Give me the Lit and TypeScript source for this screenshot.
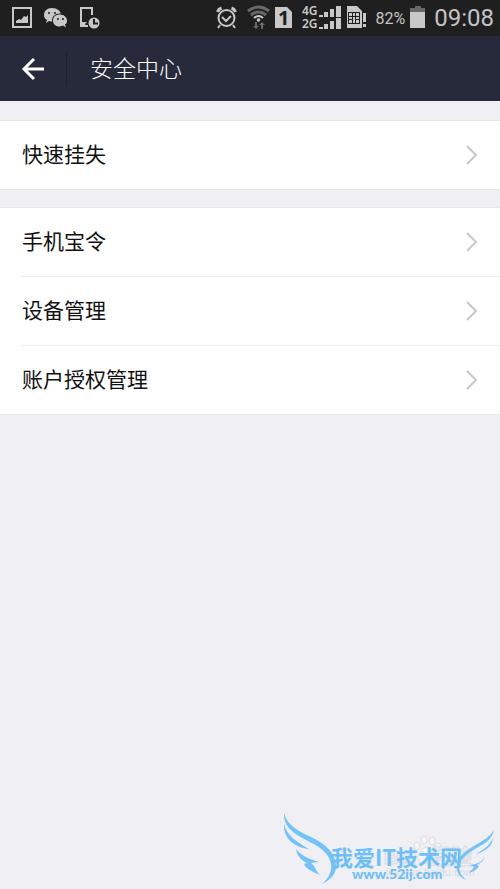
import { LitElement, html, css, svg } from "lit";
import { customElement, property } from "lit/decorators.js";

@customElement("status-bar")
class StatusBar extends LitElement {
  static styles = css`
    :host {
      display: flex;
      align-items: center;
      height: 36px;
      padding: 0 6px 0 8px;
      background: #1f1f1f;
      color: #c4c4c4;
      font-family: Roboto, "Liberation Sans", sans-serif;
    }
    svg {
      display: block;
      flex: none;
      height: 36px;
      fill: #c8c8c8;
    }
    .w32 { width: 32px; }
    .w30 { width: 30px; }
    .w24 { width: 24px; }
    .w48 { width: 48px; }
    .push { margin-left: auto; }
    .line {
      fill: none;
      stroke: #c8c8c8;
      stroke-width: 2;
    }
    .thick { stroke-width: 3; }
    .dark { fill: #1f1f1f; }
    .darkline {
      fill: none;
      stroke: #1f1f1f;
      stroke-width: 2;
    }
    .dim { fill: none; stroke: #686868; stroke-width: 3; }
    .dimfill { fill: #686868; }
    .net { font: 600 12px "Noto Sans", sans-serif; }
    .one { font: bold 20px "Noto Sans", sans-serif; fill: #1f1f1f; }
    .percent { font-size: 16px; padding: 0 1px 0 8px; }
    .time { font-size: 24px; padding-left: 4px; }
  `;
  render() {
    return html`
      <svg class="w32" viewBox="8 0 32 36" aria-hidden="true">
        <rect class="line" x="13" y="8" width="18" height="19" />
        <path d="M16 23v-2l3-2 2 1 3-4 2 1 2-2v8z" />
      </svg>
      <svg class="w32" viewBox="40 0 32 36" aria-hidden="true">
        <path d="M52 8c-5 0-8 3-8 7 0 2 1 4 3 5l-1 3 3-2 4 1c5 0 8-3 8-7s-4-7-9-7z" />
        <path class="dark" d="M60 13.500c-5 0-8 3-8 7s3 7.500 8 7.500 8-3 8-7-3-7.500-8-7.500z" />
        <path d="M60 14.500c-4 0-7 2-7 6s3 6 7 6l3-1 3 2-1-3c2-1 2-3 2-4 0-3-3-6-7-6z" />
        <g class="dark"><circle cx="49" cy="13" r="1" /><circle cx="55" cy="13" r="1" /><circle cx="58" cy="19" r="1" /><circle cx="63" cy="19" r="1" /></g>
      </svg>
      <svg class="w32" viewBox="72 0 32 36" aria-hidden="true">
        <path class="line" d="M92 15V8H81v18h7" />
        <path d="M80 22h7l-2 2 2 3h-7z" />
        <circle cx="94" cy="23" r="5.500" />
        <path class="darkline" d="M94 19v4.500h4" />
      </svg>

      <svg class="w30 push" viewBox="212 0 30 36" role="img" aria-label="Alarm">
        <circle class="line" cx="226.500" cy="18" r="8" />
        <path class="line" d="M222 17l4 4 5-5M220 25l-2 3M233 25l2 3" />
        <path class="line thick" d="M217.500 12q1-3 4-4M235.500 12q-1-3-4-4" />
      </svg>
      <svg class="w30" viewBox="242 0 30 36" role="img" aria-label="Wi-Fi">
        <path class="dim" d="M248 11q10.500-8 21 0M251 15q7.500-6 15 0" />
        <path class="line" d="M254 18q4.500-4 9 0" />
        <circle cx="258.500" cy="20" r="1.800" />
        <path class="dimfill" d="M255 22h2v4h2l-3 3-3-3h2zM261 29h2v-4h2l-3-3-3 3h2z" />
      </svg>
      <svg class="w24" viewBox="272 0 24 36" role="img" aria-label="SIM 1">
        <path d="M275 7h12l5 5v16h-17z" />
        <text class="one" x="278" y="25">1</text>
      </svg>
      <svg class="w48" viewBox="296 0 48 36" role="img" aria-label="Signal">
        <text class="net" x="302" y="15">4G</text>
        <text class="net" x="302" y="28">2G</text>
        <path d="M319 15h4v2h-4zM324 12h4v5h-4zM330 9h4v8h-4zM336 6h5v11h-5z" />
        <path d="M319 27h4v2h-4zM324 24h4v5h-4zM330 21h4v8h-4zM336 18h5v11h-5z" />
      </svg>
      <svg class="w24" viewBox="344 0 24 36" role="img" aria-label="SIM warning">
        <path d="M347 6h10l5 5v17h-15zM363 13h3v9h-3zM363 24h3v3h-3z" />
        <rect class="dark" x="348" y="12" width="12" height="12" />
        <path d="M349 13h3v3h-3zM353 13h2v3h-2zM356 13h3v3h-3zM349 17h3v2h-3zM353 17h2v6h-2zM356 17h3v2h-3zM349 20h3v3h-3zM356 20h3v3h-3z" />
      </svg>
      <span class="percent">82%</span>
      <svg class="w24" viewBox="406 0 24 36" role="img" aria-label="Battery">
        <path class="dimfill" d="M415 6h6v2h4v5h-15V8h5z" />
        <rect x="410" y="12" width="15" height="16" />
      </svg>
      <time class="time">09:08</time>
    `;
  }
}

@customElement("settings-group")
class SettingsGroup extends LitElement {
  @property({ attribute: false }) items: string[] = [];
  static styles = css`
    :host {
      display: block;
      background: #fff;
      border-top: 1px solid #e6e6ea;
      border-bottom: 1px solid #e6e6ea;
    }
    ul {
      list-style: none;
      margin: 0;
      padding: 0 0 0 22px;
    }
    li + li { border-top: 1px solid #ebebed; }
    button {
      display: flex;
      align-items: center;
      justify-content: space-between;
      width: 100%;
      height: 68px;
      margin: 0;
      padding: 0 20px 0 0;
      border: 0;
      background: none;
      color: #111;
      font: 21px "Noto Sans CJK SC", sans-serif;
      text-align: left;
    }
    span { padding-bottom: 4px; }
    svg {
      width: 16px;
      height: 24px;
      fill: none;
      stroke: #c8c8c8;
      stroke-width: 2;
    }
  `;
  render() {
    return html`<ul>
      ${this.items.map(
        (label) => html`<li>
          <button type="button">
            <span>${label}</span>
            <svg viewBox="0 0 16 24" aria-hidden="true"><path d="M3 3l9 9-9 9" /></svg>
          </button>
        </li>`
      )}
    </ul>`;
  }
}

@customElement("site-mark")
class SiteMark extends LitElement {
  static styles = css`
    :host {
      display: block;
      position: relative;
      width: 220px;
      height: 80px;
    }
    svg {
      position: absolute;
      inset: 0;
    }
    .wing { fill: #71c3fa; }
    .paw { fill: #f6f6f8; stroke: #dedee3; }
    .faint {
      font: bold 21px "Liberation Sans", "Noto Sans CJK SC", sans-serif;
      fill: #f3f3f5;
      stroke: #dcdce0;
    }
    .faint-url {
      font: 11px "Liberation Sans", sans-serif;
      fill: #dcdce0;
    }
    .name, .url {
      position: absolute;
      color: #6cbffa;
      white-space: nowrap;
    }
    .name {
      left: 51px;
      top: 33px;
      font-family: "Noto Sans CJK SC", sans-serif;
      font-size: 22px;
      font-weight: 700;
      line-height: 28px;
    }
    .url {
      left: 72px;
      top: 56px;
      font-family: Lato, sans-serif;
      font-size: 14px;
      font-weight: 900;
      line-height: 18px;
    }
  `;
  render() {
    return html`
      <svg viewBox="280 809 220 80" aria-hidden="true">
        ${svg`
          <g class="paw">
            <ellipse cx="417" cy="846" rx="3" ry="4" />
            <ellipse cx="424" cy="840" rx="3" ry="4" />
            <ellipse cx="432" cy="841" rx="3" ry="4" />
            <ellipse cx="438" cy="847" rx="3" ry="4" />
            <path d="M427 847q-4 0-6 5-5 5-2 10 3 3 8 1 6 2 9-1 3-5-2-9-3-6-7-6z" />
          </g>
          <text class="faint" x="384" y="864">Bai</text>
          <text class="faint" x="430" y="864">经验</text>
          <text class="faint-url" x="386" y="876">jingyan.baidu.com</text>
          <path class="wing" d="M284 813C287 825 298 831 311 837C326 844 336 853 336 867C336 874 330 880 322 884C329 878 332 871 331 864C329 852 318 846 306 840C292 833 283 825 284 813Z" />
          <path class="wing" d="M284 824C287 836 297 842 309 849C297 848 283 840 284 824Z" />
          <path class="wing" d="M296 849C301 855 308 859 319 862L311 863C315 866 316 871 320 875C313 872 306 869 304 864L307 863C301 860 297 856 296 849Z" />
          <path class="wing" d="M494 830C491 842 483 844 475 849C463 856 457 863 460 872C461 876 464 878 467 880C460 878 456 873 457 865C459 855 467 850 477 844C486 839 490 836 494 830Z" />
          <path class="wing" d="M493 838C492 848 484 851 475 855C482 850 489 847 493 838Z" />
          <path class="wing" d="M485 856C482 862 478 864 470 865L474 867C473 869 471 870 469 873C474 871 478 869 479 866L477 865C481 863 484 860 485 856Z" />
        `}
      </svg>
      <span class="name">我爱IT技术网</span>
      <span class="url">www.52ij.com</span>
    `;
  }
}

@customElement("app-root")
class AppRoot extends LitElement {
  static styles = css`
    :host {
      display: block;
      position: relative;
      min-height: 100vh;
      background: #efeff4;
    }
    header {
      display: flex;
      align-items: center;
      height: 65px;
      background: #272a3b;
      color: #fff;
    }
    .back {
      display: grid;
      place-items: center;
      width: 67px;
      height: 34px;
      padding: 0;
      border: 0;
      border-right: 1px solid #1e2030;
      background: none;
    }
    .back svg {
      width: 24px;
      height: 24px;
      fill: none;
      stroke: #fff;
      stroke-width: 3;
    }
    h1 {
      margin: 0;
      padding: 0 0 4px 23px;
      font: 300 23px "Noto Sans CJK SC", sans-serif;
    }
    main {
      display: grid;
      gap: 17px;
      padding-top: 19px;
    }
    site-mark {
      position: absolute;
      right: 0;
      bottom: 0;
    }
  `;
  render() {
    return html`
      <status-bar></status-bar>
      <header>
        <button class="back" type="button" aria-label="返回">
          <svg viewBox="0 0 24 24" aria-hidden="true"><path d="M13 2L3 12l10 10M3 12h20" /></svg>
        </button>
        <h1>安全中心</h1>
      </header>
      <main>
        <settings-group .items=${["快速挂失"]}></settings-group>
        <settings-group .items=${["手机宝令", "设备管理", "账户授权管理"]}></settings-group>
      </main>
      <site-mark></site-mark>
    `;
  }
}
